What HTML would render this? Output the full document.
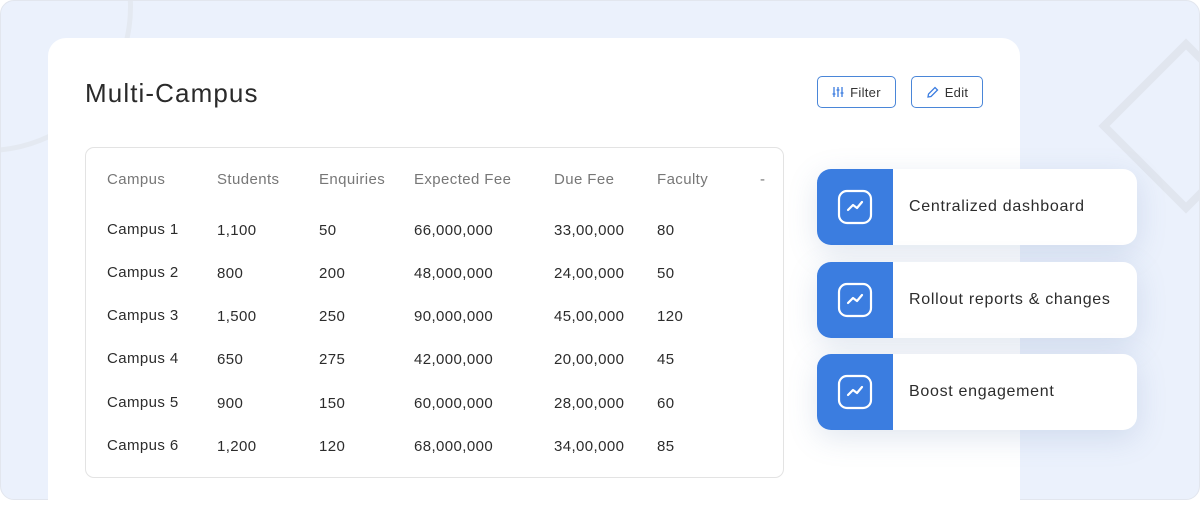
<!DOCTYPE html>
<html><head><style>
*{box-sizing:border-box;margin:0;padding:0}
body{width:1200px;height:500px;overflow:hidden;background:#fff;font-family:"Liberation Sans",sans-serif;position:relative}
.bg{position:absolute;left:0;top:0;width:1200px;height:500px;background:#ebf1fc;border:1px solid #e2e6ee;border-radius:14px;overflow:hidden}
.circ{position:absolute;left:-160px;top:-140px;width:292px;height:292px;border:5px solid #e4e9f1;border-radius:50%}
.dia{position:absolute;left:1123px;top:63px;width:124px;height:124px;border:8px solid #e1e6ef;transform:rotate(45deg)}
.card{position:absolute;left:48px;top:38px;width:972px;height:480px;background:#fff;border-radius:18px}
h1{position:absolute;left:85px;top:78px;font-size:26px;font-weight:normal;color:#2a2a2a;letter-spacing:1.1px}
.btn{position:absolute;top:76px;height:32px;border:1px solid #4a86d8;border-radius:5px;font-size:13px;color:#333;display:flex;align-items:center;justify-content:center;gap:6px;letter-spacing:.3px}
.tbl{position:absolute;left:85px;top:147px;width:699px;height:331px;border:1px solid #e3e3e3;border-radius:9px}
.c{position:absolute;font-size:15px;color:#2c2c2c;white-space:nowrap;letter-spacing:.4px}
.h{color:#777}
.feat{position:absolute;left:817px;width:320px;height:76px;background:#fff;border-radius:14px;box-shadow:0 8px 30px rgba(90,120,170,.18);overflow:hidden}
.feat .ic{position:absolute;left:0;top:0;width:76px;height:76px;background:#3b7de0;display:flex;align-items:center;justify-content:center}
.feat span{position:absolute;left:92px;top:29px;font-size:16px;color:#2c2c2c;letter-spacing:.7px}
</style></head><body>
<div class="bg"><div class="circ"></div><div class="dia"></div></div>
<div class="card"></div>
<h1>Multi-Campus</h1>
<div class="btn" style="left:817px;width:79px"><svg width="12" height="12" viewBox="0 0 12 12" stroke="#3b7de0" stroke-width="1.3" fill="none"><path d="M2 1v10M6 1v10M10 1v10M0.5 8h3M4.5 4h3M8.5 7h3"/></svg>Filter</div>
<div class="btn" style="left:911px;width:72px"><svg width="13" height="13" viewBox="0 0 13 13" stroke="#3b7de0" stroke-width="1.3" fill="none"><path d="M2 11l.5-3 6.5-6.5 2.5 2.5L5 10.5z"/></svg>Edit</div>
<div class="tbl"></div>
<div id="t"></div>
<div class="feat" style="top:169px"><div class="ic"><svg width="36" height="36" viewBox="0 0 36 36" fill="none" stroke="#fff" stroke-width="2.2" stroke-linecap="round" stroke-linejoin="round"><rect x="2" y="2" width="32" height="32" rx="8"/><path d="M11 21l5-5 4 3 5-6"/></svg></div><span>Centralized dashboard</span></div>
<div class="feat" style="top:262px"><div class="ic"><svg width="36" height="36" viewBox="0 0 36 36" fill="none" stroke="#fff" stroke-width="2.2" stroke-linecap="round" stroke-linejoin="round"><rect x="2" y="2" width="32" height="32" rx="8"/><path d="M11 21l5-5 4 3 5-6"/></svg></div><span>Rollout reports &amp; changes</span></div>
<div class="feat" style="top:354px"><div class="ic"><svg width="36" height="36" viewBox="0 0 36 36" fill="none" stroke="#fff" stroke-width="2.2" stroke-linecap="round" stroke-linejoin="round"><rect x="2" y="2" width="32" height="32" rx="8"/><path d="M11 21l5-5 4 3 5-6"/></svg></div><span>Boost engagement</span></div>
<script>
var xs=[107,217,319,414,554,657,760];
var rows=[["Campus","Students","Enquiries","Expected Fee","Due Fee","Faculty","-"],
["Campus 1","1,100","50","66,000,000","33,00,000","80"],
["Campus 2","800","200","48,000,000","24,00,000","50"],
["Campus 3","1,500","250","90,000,000","45,00,000","120"],
["Campus 4","650","275","42,000,000","20,00,000","45"],
["Campus 5","900","150","60,000,000","28,00,000","60"],
["Campus 6","1,200","120","68,000,000","34,00,000","85"]];
var ys=[171,221,264,307,350,394,437],h="";
rows.forEach(function(r,i){r.forEach(function(v,j){h+='<div class="c'+(i==0?' h':'')+'" style="left:'+xs[j]+'px;top:'+(ys[i]+(i>0&&j>0?1:0))+'px">'+v+'</div>';});});
document.getElementById("t").innerHTML=h;
</script>
</body></html>
